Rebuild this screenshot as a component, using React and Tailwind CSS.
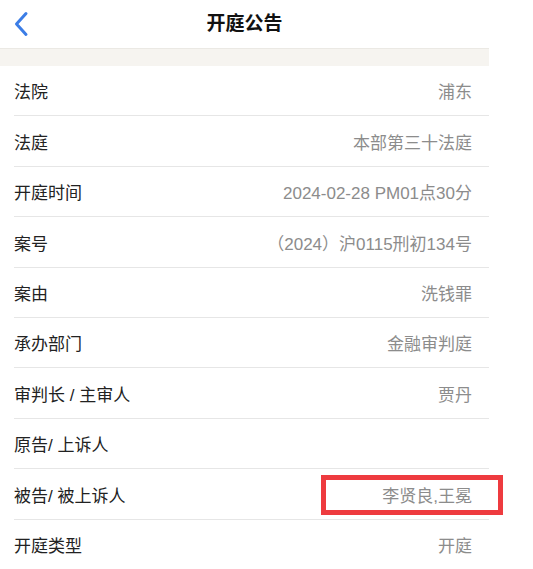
const rows = [
  { label: "法院", value: "浦东" },
  { label: "法庭", value: "本部第三十法庭" },
  { label: "开庭时间", value: "2024-02-28 PM01点30分" },
  { label: "案号", value: "（2024）沪0115刑初134号" },
  { label: "案由", value: "洗钱罪" },
  { label: "承办部门", value: "金融审判庭" },
  { label: "审判长 / 主审人", value: "贾丹" },
  { label: "原告/ 上诉人", value: "" },
  { label: "被告/ 被上诉人", value: "李贤良,王冕", marked: true },
  { label: "开庭类型", value: "开庭" }
];

function Row({ label, value, marked }) {
  return (
    <div className="relative pl-[14px]">
      <div className="flex h-[50.4px] items-center justify-between border-b border-[#e6e6e6] pr-[17px] pt-[5px]">
        <span className="text-[17px] text-[#222]">{label}</span>
        <span className="text-[17px] text-[#8c8c8c]">{value}</span>
      </div>
      {marked && (
        <div className="absolute left-[321px] top-[6px] h-[40px] w-[182px] border-[5px] border-[#ee3b3f]" />
      )}
    </div>
  );
}

export default function App() {
  return (
    <div
      className="h-[569px] w-[533px] overflow-hidden bg-white"
      style={{ fontFamily: '"Liberation Sans", "Noto Sans CJK SC", sans-serif' }}
    >
      <div className="w-[489px]">
        <div className="relative flex h-[48px] items-center justify-center">
          <svg
            className="absolute left-[13px] top-[11px]"
            width="18"
            height="26"
            viewBox="0 0 18 26"
            fill="none"
            stroke="#3b7de6"
            strokeWidth="3"
            strokeLinecap="round"
            strokeLinejoin="round"
          >
            <path d="M13 2.5 L3.5 13 L13 23.5" />
          </svg>
          <span className="text-[19px] font-semibold text-[#111]">开庭公告</span>
        </div>
        <div className="h-[18px] border-t border-[#ebe9e4] bg-[#f6f4f0]" />
        {rows.map((r) => (
          <Row key={r.label} {...r} />
        ))}
      </div>
    </div>
  );
}
